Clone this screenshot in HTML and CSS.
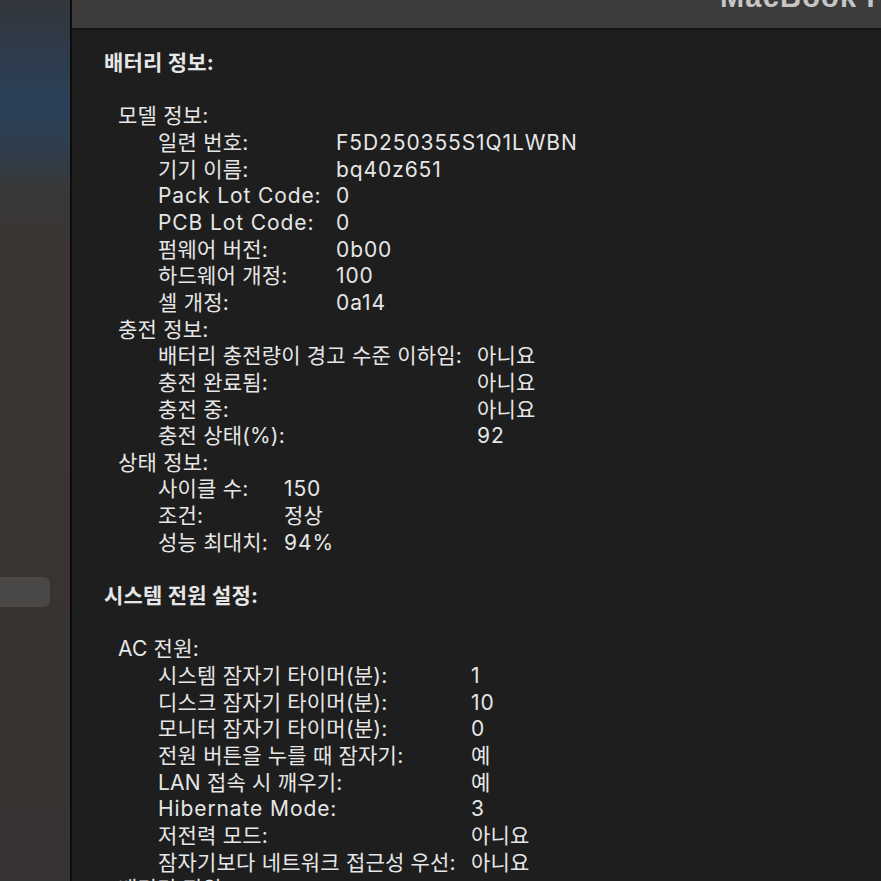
FILE: index.html
```html
<!DOCTYPE html>
<html lang="ko">
<head>
    <meta charset="UTF-8">
    <title>시스템 정보</title>
    <link rel="stylesheet" href="styles.css">
</head>
<body>
    <div class="window">
        <!-- 사이드바 -->
        <aside class="sidebar">
            <div class="sidebar-item"></div>
        </aside>

        <main class="main">
            <header class="toolbar">
                <span class="toolbar-title">MacBook Pro</span>
            </header>

            <div class="content">
                <h2 class="section-title">배터리 정보:</h2>
                <div class="blank"></div>

                <div class="group">
                    <div class="group-title">모델 정보:</div>
                    <div class="rows rows-model">
                        <span>일련 번호:</span><span class="latin">F5D250355S1Q1LWBN</span>
                        <span>기기 이름:</span><span class="latin">bq40z651</span>
                        <span class="latin">Pack Lot Code:</span><span>0</span>
                        <span class="latin">PCB Lot Code:</span><span>0</span>
                        <span>펌웨어 버전:</span><span class="latin">0b00</span>
                        <span>하드웨어 개정:</span><span class="latin">100</span>
                        <span>셀 개정:</span><span class="latin">0a14</span>
                    </div>
                </div>

                <div class="group">
                    <div class="group-title">충전 정보:</div>
                    <div class="rows rows-charge">
                        <span>배터리 충전량이 경고 수준 이하임:</span><span>아니요</span>
                        <span>충전 완료됨:</span><span>아니요</span>
                        <span>충전 중:</span><span>아니요</span>
                        <span>충전 상태(%):</span><span class="latin">92</span>
                    </div>
                </div>

                <div class="group">
                    <div class="group-title">상태 정보:</div>
                    <div class="rows rows-health">
                        <span>사이클 수:</span><span class="latin">150</span>
                        <span>조건:</span><span>정상</span>
                        <span>성능 최대치:</span><span class="latin">94%</span>
                    </div>
                </div>

                <div class="blank"></div>
                <h2 class="section-title">시스템 전원 설정:</h2>
                <div class="blank"></div>

                <div class="group">
                    <div class="group-title">AC 전원:</div>
                    <div class="rows rows-ac">
                        <span>시스템 잠자기 타이머(분):</span><span>1</span>
                        <span>디스크 잠자기 타이머(분):</span><span class="latin">10</span>
                        <span>모니터 잠자기 타이머(분):</span><span>0</span>
                        <span>전원 버튼을 누를 때 잠자기:</span><span>예</span>
                        <span>LAN 접속 시 깨우기:</span><span>예</span>
                        <span class="latin">Hibernate Mode:</span><span>3</span>
                        <span>저전력 모드:</span><span>아니요</span>
                        <span>잠자기보다 네트워크 접근성 우선:</span><span>아니요</span>
                    </div>
                </div>

                <div class="group">
                    <div class="group-title">배터리 전원:</div>
                </div>
            </div>
        </main>
    </div>
</body>
</html>
```

FILE: styles.css
```css
html, body {
    margin: 0;
    height: 100%;
    overflow: hidden;
}
body {
    background: #1e1e1e;
    color: #e6e6e6;
    font-family: Inter, "Noto Sans CJK KR", sans-serif;
    font-size: 21px;
    letter-spacing: 0.2px;
}
.window {
    display: flex;
    height: 100%;
}
.sidebar {
    width: 72px;
    flex-shrink: 0;
    background: linear-gradient(to bottom, #33363b 0px, #2d3c4d 60px, #2a4158 110px, #2f3d4b 150px, #383839 190px, #3a3533 240px, #393432 600px, #363433 881px);
    border-right: 2px solid #0c0c0c;
    padding-top: 577px;
    box-sizing: border-box;
}
.sidebar-item {
    width: 50px;
    height: 30px;
    background: #4a4847;
    border-radius: 0 7px 7px 0;
}
.main {
    flex: 1;
    display: flex;
    flex-direction: column;
    min-width: 0;
}
.toolbar {
    height: 28px;
    flex-shrink: 0;
    background: #3d3c3b;
    border-bottom: 2px solid #161616;
    overflow: hidden;
    padding-left: 648px;
    white-space: nowrap;
}
.toolbar-title {
    display: block;
    margin-top: -17px;
    font-family: "Liberation Sans", sans-serif;
    font-weight: bold;
    font-size: 29px;
    line-height: 28px;
    letter-spacing: 1.2px;
    color: #c6c6c6;
}
.content {
    padding: 20px 0 0 32px;
    line-height: 26.65px;
}
.section-title {
    margin: 0;
    font-size: 21px;
    font-weight: bold;
    line-height: 26.65px;
}
.blank {
    height: 26.65px;
}
.group {
    padding-left: 14px;
}
.rows {
    display: grid;
    padding-left: 40px;
    white-space: nowrap;
}
.latin {
    letter-spacing: 0.9px;
}
.rows-model { grid-template-columns: 178px auto; }
.rows-charge { grid-template-columns: 319px auto; }
.rows-health { grid-template-columns: 126px auto; }
.rows-ac { grid-template-columns: 313px auto; }
```
